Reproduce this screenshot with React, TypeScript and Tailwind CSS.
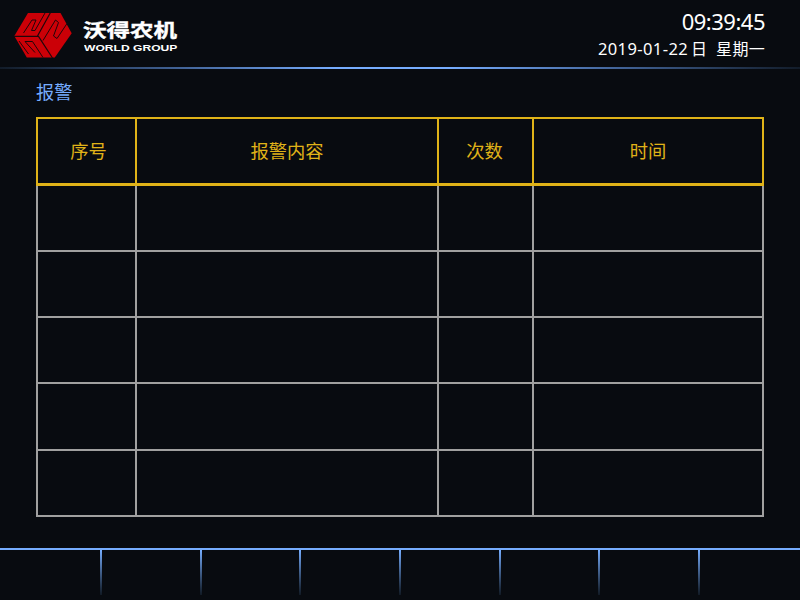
const HEADERS = [
  { text: "序号", shift: "pl-1" },
  { text: "报警内容", shift: "" },
  { text: "次数", shift: "pr-0.5" },
  { text: "时间", shift: "" },
];
const COLS = "grid grid-cols-[99px_302px_95px_230px]";
const ROWS = ["h-[66px]", "h-[66px]", "h-[66px]", "h-[67px]", "h-[66px]"];
const TABS = [
  "w-[102px]",
  "w-[100px]",
  "w-[99px]",
  "w-[100px]",
  "w-[100px]",
  "w-[99px]",
  "w-[100px]",
];

function Logo() {
  return (
    <svg width="60" height="48" viewBox="13 11 60 48" className="block">
      <path d="M28 13H60.5L71.7 33.3L54.8 57.5H26.8L14.3 36Z" fill="#cb0007" />
      <g fill="none" stroke="#20060a" strokeWidth="1">
        <path strokeWidth="1.2" d="M14 36.4H38.5L52.5 58M37.5 36L50.5 12.5" />
        <path d="M23.5 33L32 20H36L31.5 30.5H35L45 13" />
        <path d="M43 40.5L55.5 20L58.5 22.5L53.5 36L57 38.5L67 23.5" />
        <path d="M19 41L28.5 54M25 41.5H32.5L43 57.5M25 41.5L35 52.5" />
      </g>
    </svg>
  );
}

function Header() {
  return (
    <header className="flex h-[67px] items-start justify-between pl-[13px] pr-[35px]">
      <div className="flex pt-[11px]">
        <Logo />
        <div className="ml-2.5 w-[96px] pt-[9px] text-white">
          <div className="h-[19px] origin-left scale-x-[1.27] whitespace-nowrap font-['Noto_Sans_CJK_SC',sans-serif] text-[18.5px] leading-[18px] font-bold [-webkit-text-stroke:0.4px_white]">沃得农机</div>
          <div className="mt-[2.5px] ml-px h-[11px] origin-left scale-x-[1.29] whitespace-nowrap font-['Liberation_Sans',sans-serif] text-[9.4px] leading-[11px] font-bold">WORLD GROUP</div>
        </div>
      </div>
      <div className="flex flex-col items-end pt-[7px] text-white">
        <div className="text-[22px] leading-7 tracking-[-0.5px]">09:39:45</div>
        <div className="mt-0.5 flex text-[16px] leading-6">
          <span className="text-[16.5px] tracking-[0.4px]">2019-01-22</span>
          <span className="ml-[3px]">日</span>
          <span className="ml-[9px] tracking-[0.3px]">星期一</span>
        </div>
      </div>
    </header>
  );
}

export default function App() {
  return (
    <div className="flex h-[600px] w-[800px] flex-col overflow-hidden bg-[#080b10] font-['Noto_Sans','Noto_Sans_CJK_SC',sans-serif]">
      <Header />
      <div className="h-0.5 shrink-0 bg-[linear-gradient(to_right,#121c29_0%,#43659a_23%,#76adff_42%,#76adff_56%,#43659a_77%,#121c29_100%)]" />
      <main className="h-[479px] px-9 pt-[9px]">
        <h1 className="h-[39px] text-[18.2px] leading-7 text-[#76adff]">报警</h1>
        <div className="w-[728px]">
          <div className={`${COLS} h-[69px] border-t-2 border-b-3 border-l-2 border-[#e0b318]`}>
            {HEADERS.map((h) => (
              <div key={h.text} className={`flex items-center justify-center border-r-2 border-[#e0b318] text-[18.3px] text-[#e0b318] ${h.shift}`}>{h.text}</div>
            ))}
          </div>
          {ROWS.map((height, i) => (
            <div key={i} className={`${COLS} ${height} border-b-2 border-l-2 border-[#a0a0a0]`}>
              {HEADERS.map((h) => (
                <div key={h.text} className="border-r-2 border-[#a0a0a0]" />
              ))}
            </div>
          ))}
        </div>
      </main>
      <nav className="flex h-[52px] border-t-2 border-[#76adff]">
        {TABS.map((width, i) => (
          <div key={i} className={`${width} flex h-[45px] justify-end`}>
            <div className="w-0.5 bg-linear-to-b from-[#76adff] to-[#111a25]" />
          </div>
        ))}
      </nav>
    </div>
  );
}
